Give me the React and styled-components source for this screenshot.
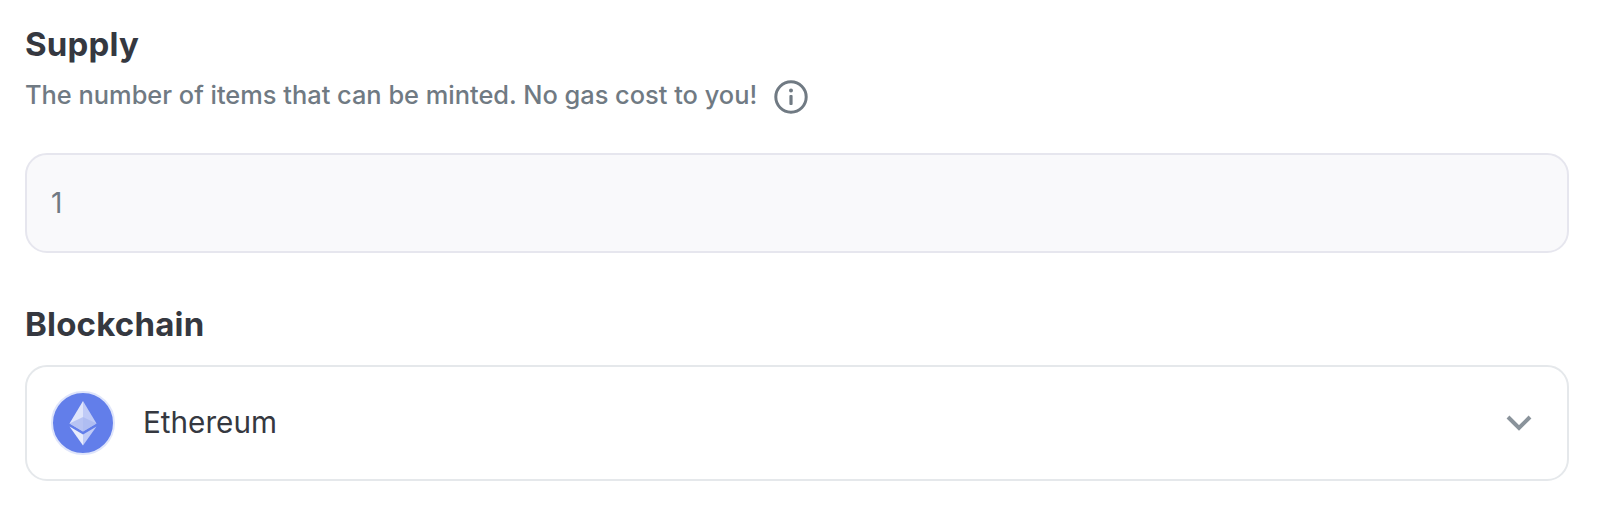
import React from 'react'
import styled, { createGlobalStyle } from 'styled-components'

const Global = createGlobalStyle`
  html, body {
    margin: 0;
    background: #fff;
    font-family: Inter, "Noto Sans", sans-serif;
  }
`

const Page = styled.div`
  width: 1618px;
  height: 522px;
  box-sizing: border-box;
  padding: 24px 49px 0 25px;
  overflow: hidden;
`
const Title = styled.h2`
  margin: 0;
  font-size: 33px;
  line-height: 40px;
  font-weight: 700;
  color: #353840;
  letter-spacing: 0.2px;
`
const HintRow = styled.div`
  display: flex;
  align-items: center;
  gap: 16px;
  margin-top: 10px;
  height: 40px;
`
const Hint = styled.span`
  font-size: 25.4px;
  font-weight: 500;
  color: #707a83;
  white-space: nowrap;
`
const InfoIcon = styled.svg`
  width: 36px;
  height: 36px;
  margin-top: 6px;
  color: #707a83;
`
const Input = styled.div`
  display: flex;
  align-items: center;
  box-sizing: border-box;
  height: 100px;
  margin-top: 39px;
  padding: 0 24px 1px;
  border: 2px solid #e6e6ee;
  border-radius: 22px;
  background: #f9f9fb;
  font-size: 28px;
  color: #707a83;
`
const BlockTitle = styled(Title)`
  margin-top: 51px;
`
const Select = styled.div`
  display: flex;
  align-items: center;
  box-sizing: border-box;
  height: 116px;
  margin-top: 21px;
  padding: 0 34px 0 24px;
  border: 2px solid #e5e8eb;
  border-radius: 22px;
  background: #fff;
`
const Coin = styled.svg`
  width: 64px;
  height: 64px;
  flex: none;
`
const Diamond = styled.g`
  filter: blur(0.6px);
`
const ChainName = styled.span`
  flex: 1;
  margin: 0 0 2px 28px;
  font-size: 29.7px;
  color: #353840;
`
const Chevron = styled.svg`
  width: 28px;
  height: 18px;
  color: #8a939b;
`

export default function App() {
  return (
    <Page>
      <Global />
      <Title>Supply</Title>
      <HintRow>
        <Hint>The number of items that can be minted. No gas cost to you!</Hint>
        <InfoIcon viewBox="0 0 36 36" fill="none">
          <circle cx="18" cy="18" r="15.2" stroke="currentColor" strokeWidth="3" />
          <circle cx="18" cy="11.5" r="2" fill="currentColor" />
          <rect x="16.4" y="16" width="3.2" height="10" rx="1" fill="currentColor" />
        </InfoIcon>
      </HintRow>
      <Input>1</Input>
      <BlockTitle>Blockchain</BlockTitle>
      <Select>
        <Coin viewBox="0 0 64 64">
          <circle cx="32" cy="32" r="31" fill="#627eea" stroke="#dfe5fb" strokeWidth="2" />
          <Diamond>
            <path d="M32 10 L18.5 32.5 L32 40.5 Z" fill="#fff" fillOpacity="0.8" />
            <path d="M32 10 L45.5 32.5 L32 40.5 Z" fill="#fff" fillOpacity="0.6" />
            <path d="M32 26 L18.5 32.5 L32 40.5 L45.5 32.5 Z" fill="#a9b8f0" fillOpacity="0.75" />
            <path d="M18.5 35.5 L32 43.5 V54.5 Z" fill="#fff" fillOpacity="0.85" />
            <path d="M45.5 35.5 L32 43.5 V54.5 Z" fill="#fff" fillOpacity="0.6" />
          </Diamond>
        </Coin>
        <ChainName>Ethereum</ChainName>
        <Chevron viewBox="0 0 28 18" fill="none">
          <path d="M3 3 L14 14 L25 3" stroke="currentColor" strokeWidth="4" />
        </Chevron>
      </Select>
    </Page>
  )
}
